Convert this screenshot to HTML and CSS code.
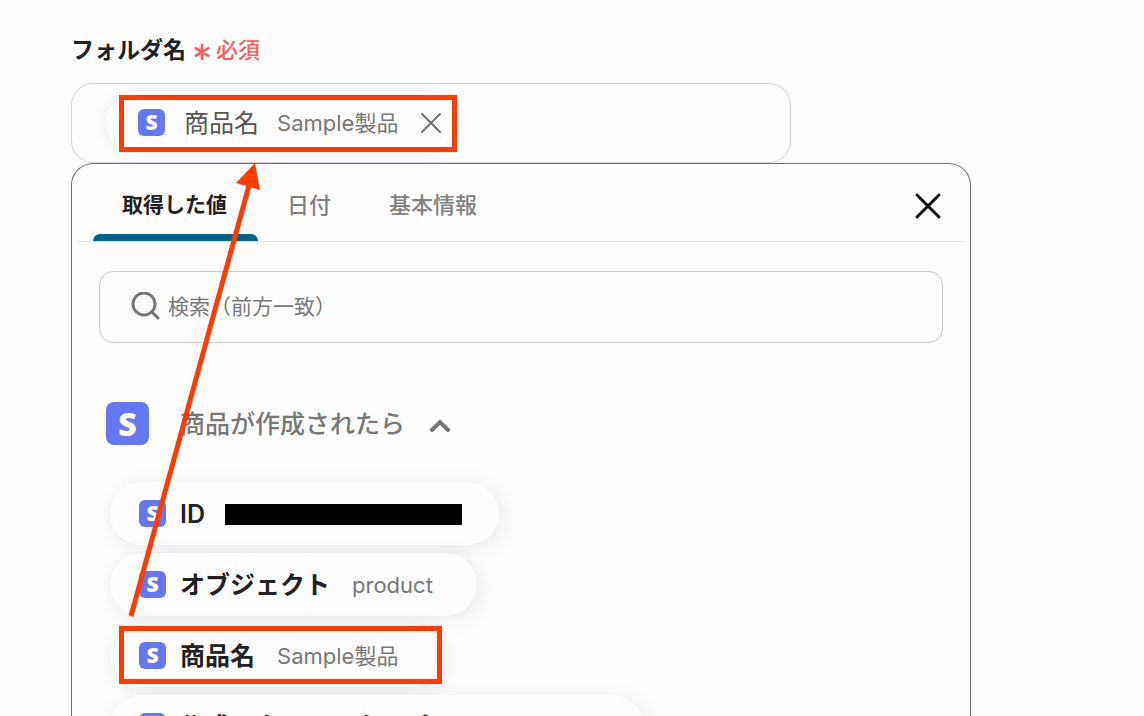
FILE: index.html
```
<!DOCTYPE html>
<html lang="ja">
<head>
  <meta charset="UTF-8" />
  <meta name="viewport" content="width=device-width, initial-scale=1.0"/>
  <title>フォルダ名</title>
  <link rel="stylesheet" href="styles.css">
</head>
<body>

  <main class="form">
    <h1 class="field-label">フォルダ名 <span class="required"><svg class="asterisk" viewBox="0 0 18 18" aria-hidden="true"><path d="M9 1v16M2 5l14 8M16 5L2 13"/></svg>必須</span></h1>

    <div class="field">
      <div class="chip chip-selected">
        <span class="logo">S</span>
        <span class="chip-name">商品名</span>
        <span class="chip-value">Sample製品</span>
        <button class="chip-remove" aria-label="削除">
          <svg viewBox="0 0 22 22"><path d="M2 2l18 18M20 2L2 20"/></svg>
        </button>
        <span class="highlight highlight-selected"></span>
      </div>
    </div>

    <section class="picker">
      <nav class="tabs">
        <button class="tab active">取得した値</button>
        <button class="tab">日付</button>
        <button class="tab">基本情報</button>
        <button class="close" aria-label="閉じる">
          <svg viewBox="0 0 28 28"><path d="M3 3l22 22M25 3L3 25"/></svg>
        </button>
      </nav>

      <label class="search">
        <svg class="search-icon" viewBox="0 0 30 30" aria-hidden="true"><circle cx="14" cy="12" r="11"/><path d="M22 20l6 6"/></svg>
        <input type="text" class="search-input" aria-label="検索" placeholder="検索（前方一致）" />
      </label>

      <button class="group">
        <span class="logo logo-large">S</span>
        <span class="group-name">商品が作成されたら</span>
        <svg class="chevron" viewBox="0 0 20 14" aria-hidden="true"><path d="M2 12l8-8 8 8"/></svg>
      </button>

      <div class="values">
        <button class="chip">
          <span class="logo">S</span>
          <span class="chip-name">ID</span>
          <span class="redacted"></span>
        </button>
        <button class="chip">
          <span class="logo">S</span>
          <span class="chip-name">オブジェクト</span>
          <span class="chip-value">product</span>
        </button>
        <button class="chip">
          <span class="logo">S</span>
          <span class="chip-name">商品名</span>
          <span class="chip-value">Sample製品</span>
          <span class="highlight"></span>
        </button>
        <button class="chip chip-wide">
          <span class="logo">S</span>
          <span class="chip-name">作成のタイムスタンプ</span>
        </button>
      </div>
      <span class="resize-handle"></span>
    </section>

    <svg class="arrow" viewBox="0 0 140 460" aria-hidden="true">
      <path class="arrow-line" d="M11 456L130 22"/>
      <path class="arrow-head" d="M135 3l-19 20 24 7z"/>
    </svg>
  </main>

</body>
</html>
```
FILE: styles.css
```
* {
  box-sizing: border-box;
}
body {
  margin: 0;
  height: 100vh;
  overflow: hidden;
  font-family: Inter, 'Noto Sans CJK JP', sans-serif;
  background: #fefefe;
  color: #212124;
}
button {
  padding: 0;
  border: none;
  background: none;
  font-family: inherit;
  color: inherit;
}
svg {
  display: block;
  fill: none;
  stroke: currentColor;
  stroke-linecap: round;
}
.form {
  position: relative;
  max-width: 971px;
  height: 100vh;
  overflow: hidden;
  display: flex;
  flex-direction: column;
  padding: 32px 0 0 71px;
}
.field-label {
  display: flex;
  align-items: center;
  gap: 8px;
  margin: 0 0 15px;
  font-size: 23px;
  line-height: 36px;
  font-weight: 600;
}
.required {
  display: flex;
  align-items: center;
  gap: 6px;
  font-size: 22px;
  font-weight: 500;
  color: #ff5a5f;
}
.asterisk {
  width: 16px;
  margin-top: 4px;
  stroke-width: 3;
}
.field {
  flex: none;
  width: 80%;
  height: 80px;
  padding: 8px 34px;
  border: 1px solid #d4d4de;
  border-radius: 22px;
}
.logo {
  display: flex;
  align-items: center;
  justify-content: center;
  flex: none;
  width: 27px;
  height: 27px;
  border-radius: 6px;
  background: #6677f1;
  color: #fff;
  font-family: 'Noto Sans', sans-serif;
  font-size: 21px;
  line-height: 27px;
  font-weight: 900;
}
.logo-large {
  width: 43px;
  height: 43px;
  border-radius: 8px;
  font-size: 32px;
  line-height: 43px;
}
.chip {
  position: relative;
  display: flex;
  align-items: center;
  height: 63px;
  padding: 0 44px 0 29px;
  border-radius: 32px;
  background: #fefefe;
  box-shadow: 4px 4px 20px rgba(60, 40, 70, 0.1);
  font-size: 25px;
  line-height: 36px;
}
.chip-name {
  margin-left: 14px;
  font-weight: 600;
}
.chip-value {
  margin-left: 22px;
  font-size: 22px;
  color: #777;
}
.chip-selected {
  width: 348px;
  height: 61px;
  padding: 0 12px 0 32px;
  box-shadow: 0 0 16px rgba(60, 40, 90, 0.07);
}
.chip-selected .chip-name {
  margin-left: 19px;
  font-weight: 400;
  color: #555;
}
.chip-selected .chip-value {
  margin-left: 18px;
}
.chip-remove {
  width: 22px;
  margin-left: auto;
  color: #707070;
  stroke-width: 2;
}
.picker {
  position: relative;
  flex: 1;
  border: 1px solid #707073;
  border-bottom: none;
  border-radius: 22px 22px 0 0;
  background: #fefefe;
}
.tabs {
  display: flex;
  height: 78px;
  margin: 0 6px;
  padding: 0 22px 0 15px;
  border-bottom: 1px solid #e2e2e2;
}
.tab {
  position: relative;
  padding: 4px 29px 0;
  font-size: 22px;
  line-height: 32px;
  font-weight: 500;
  color: #808080;
}
.tab.active {
  padding: 4px 31px 0 29px;
  font-size: 21px;
  font-weight: 600;
  color: #212124;
}
.tab.active::after {
  content: '';
  position: absolute;
  left: 0;
  right: 0;
  bottom: 0;
  height: 7px;
  border-radius: 7px 7px 0 0;
  background: #036488;
}
.close {
  width: 28px;
  margin: 6px 0 0 auto;
  color: #050505;
  stroke-width: 3;
}
.search {
  display: flex;
  align-items: center;
  height: 72px;
  margin: 29px 27px 0;
  padding: 0 30px;
  border: 1px solid #c9c9cc;
  border-radius: 14px;
}
.search-icon {
  width: 30px;
  stroke-width: 3;
  color: #777;
}
.search-input {
  flex: 1;
  margin-left: 8px;
  padding: 0;
  border: none;
  outline: none;
  background: none;
  font-family: inherit;
  font-size: 21px;
  line-height: 32px;
}
.search-input::placeholder {
  color: #777;
}
.group {
  display: flex;
  align-items: center;
  margin: 59px 0 0 34px;
  color: #777;
}
.group-name {
  margin-left: 31px;
  font-size: 25px;
  line-height: 36px;
  font-weight: 500;
}
.chevron {
  width: 20px;
  margin: 2px 0 0 25px;
  stroke-width: 4;
}
.values {
  display: flex;
  flex-direction: column;
  align-items: flex-start;
  gap: 8px;
  margin: 37px 0 0 38px;
}
.chip-wide {
  width: 534px;
}
.redacted {
  width: 237px;
  height: 21px;
  margin: 2px -7px 0 20px;
  background: #000;
}
.highlight {
  position: absolute;
  top: 2px;
  left: 9px;
  width: 323px;
  height: 58px;
  border: 5px solid #ff3b00;
}
.highlight-selected {
  top: 3px;
  left: 13px;
  width: 338px;
  height: 57px;
}
.resize-handle {
  position: absolute;
  top: 202px;
  right: -6px;
  width: 1px;
  height: 14px;
  background: #555;
}
.arrow {
  position: absolute;
  top: 160px;
  left: 120px;
  width: 140px;
  height: 460px;
}
.arrow-line {
  stroke: #ff3b00;
  stroke-width: 5;
  stroke-linecap: butt;
}
.arrow-head {
  fill: #ff3b00;
  stroke: none;
}
```
